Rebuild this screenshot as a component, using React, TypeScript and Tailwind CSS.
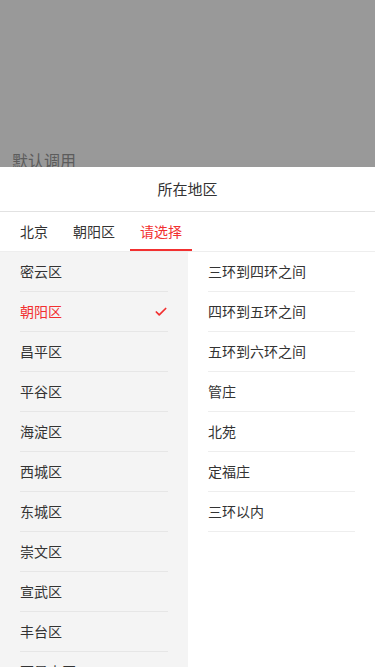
import { Check } from 'lucide-react'

const districts = ['密云区', '朝阳区', '昌平区', '平谷区', '海淀区', '西城区', '东城区', '崇文区', '宣武区', '丰台区', '石景山区']
const areas = ['三环到四环之间', '四环到五环之间', '五环到六环之间', '管庄', '北苑', '定福庄', '三环以内']

export default function App() {
  const selected = '朝阳区'

  return (
    <div className="h-[667px] w-[375px] overflow-hidden bg-white font-['Noto_Sans_CJK_SC',sans-serif]">
      <div className="h-[167px] overflow-hidden bg-[#999999] pl-3 pt-[148px]">
        <p className="text-[16px] leading-6 text-[#5c5c5c]">默认调用</p>
      </div>

      <div className="bg-white">
        <div className="flex h-[45px] items-center justify-center border-b border-[#e2e2e2] text-[15px] text-[#333]">
          所在地区
        </div>

        <div className="flex h-[40px] items-stretch gap-[5px] border-b border-[#eeeeee] pl-[10px] text-[14px]">
          <div className="flex items-center px-[10px] text-[#333]">北京</div>
          <div className="flex items-center px-[10px] text-[#333]">朝阳区</div>
          <div className="flex items-center border-b-2 border-[#f23030] px-[10px] pt-[2px] text-[#f23030]">请选择</div>
        </div>

        <div className="flex">
          <ul className="w-[188px] bg-[#f4f4f4] pb-10">
            {districts.map((d) => (
              <li key={d} className="px-5">
                <div className="flex h-[40px] items-center justify-between border-b border-[#e6e6e6] text-[14px]">
                  <span className={d === selected ? 'text-[#f23030]' : 'text-[#333]'}>{d}</span>
                  {d === selected && <Check className="h-[14px] w-[14px] text-[#f23030]" strokeWidth={3} />}
                </div>
              </li>
            ))}
          </ul>
          <ul className="flex-1">
            {areas.map((a) => (
              <li key={a} className="px-5">
                <div className="flex h-[40px] items-center border-b border-[#eeeeee] text-[14px] text-[#333]">{a}</div>
              </li>
            ))}
          </ul>
        </div>
      </div>
    </div>
  )
}
